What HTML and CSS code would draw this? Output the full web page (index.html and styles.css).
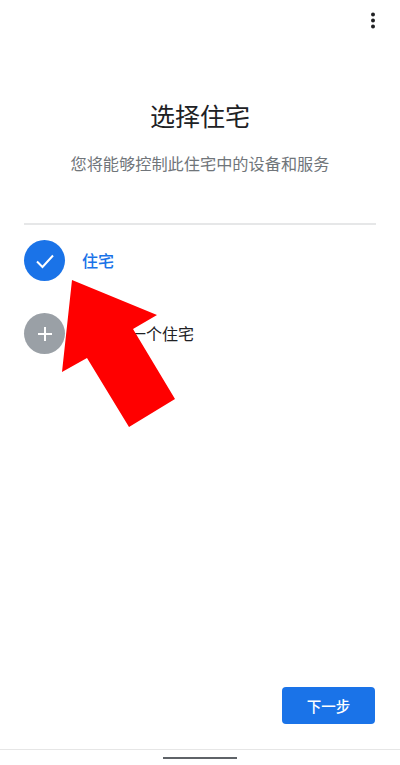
FILE: index.html
```html
<!DOCTYPE html>
<html>
<head>
    <title>选择住宅</title>
    <meta name="viewport" content="width=device-width, initial-scale=1.0">
    <link rel="stylesheet" href="styles.css">
</head>
<body>
    <div class="screen">
        <div class="top-bar">
            <svg class="menu-icon" width="6" height="18" viewBox="0 0 6 18">
                <circle cx="3" cy="2.5" r="2" />
                <circle cx="3" cy="8.5" r="2" />
                <circle cx="3" cy="14.5" r="2" />
            </svg>
        </div>

        <h1>选择住宅</h1>
        <p class="subtitle">您将能够控制此住宅中的设备和服务</p>

        <div class="home-list">
            <div class="home-row selected">
                <div class="home-icon">
                    <svg width="20" height="20" viewBox="0 0 20 20">
                        <path d="M2 10.5l5.5 5.5 10.5-11.5" />
                    </svg>
                </div>
                <span>住宅</span>
            </div>
            <div class="home-row">
                <div class="home-icon add">
                    <svg width="16" height="16" viewBox="0 0 16 16">
                        <path d="M8 1v14M1 8h14" />
                    </svg>
                </div>
                <span>添加另一个住宅</span>
            </div>
        </div>

        <div class="actions">
            <button class="next-button">下一步</button>
        </div>

        <div class="nav-bar">
            <div class="nav-handle"></div>
        </div>

        <!-- red arrow drawn over the screenshot -->
        <svg class="arrow" width="400" height="765" viewBox="0 0 400 765">
            <polygon points="72,280 157,315 133,329 175,399 129,427 87,358 62,372" />
        </svg>
    </div>
</body>
</html>
```

FILE: styles.css
```css
body {
    margin: 0;
    background: white;
    font-family: "Roboto", "Noto Sans CJK SC", sans-serif;
}
.screen {
    position: relative;
    display: flex;
    flex-direction: column;
    width: 400px;
    height: 765px;
    overflow: hidden;
}
.top-bar {
    display: flex;
    justify-content: flex-end;
    height: 30px;
    padding: 12px 24px 0 0;
    box-sizing: border-box;
}
.menu-icon {
    fill: #202124;
}
h1 {
    margin: 72px 0 0;
    height: 32px;
    font-size: 25px;
    line-height: 32px;
    font-weight: 400;
    color: #202124;
    text-align: center;
}
.subtitle {
    margin: 19px 0 0;
    height: 24px;
    font-size: 16.2px;
    line-height: 24px;
    color: #70757a;
    text-align: center;
}
.home-list {
    margin: 46px 24px 0;
    padding-top: 15px;
    border-top: 2px solid #e6e7e8;
}
.home-row {
    display: flex;
    align-items: center;
    gap: 17px;
    margin-bottom: 32px;
    font-size: 16px;
    color: #202124;
}
.home-row span {
    margin-top: -1px;
}
.home-row.selected {
    font-weight: 500;
    color: #1a73e8;
}
.home-icon {
    display: flex;
    justify-content: center;
    align-items: center;
    width: 41px;
    height: 41px;
    border-radius: 50%;
    background: #1a73e8;
}
.home-icon.add {
    background: #9aa0a6;
}
.home-icon svg {
    fill: none;
    stroke: white;
    stroke-width: 2;
}
.actions {
    display: flex;
    justify-content: flex-end;
    margin-top: auto;
    padding-right: 25px;
}
.next-button {
    width: 93px;
    height: 37px;
    border: none;
    border-radius: 4px;
    background: #1a73e8;
    color: white;
    font-family: inherit;
    font-size: 14.5px;
    font-weight: 500;
}
.nav-bar {
    display: flex;
    justify-content: center;
    height: 16px;
    margin-top: 25px;
    padding-top: 7px;
    box-sizing: border-box;
    border-top: 1px solid #e6e6e6;
}
.nav-handle {
    width: 74px;
    height: 2px;
    background: #5f6368;
}
.arrow {
    position: absolute;
    top: 0;
    left: 0;
    fill: #ff0000;
}
```
